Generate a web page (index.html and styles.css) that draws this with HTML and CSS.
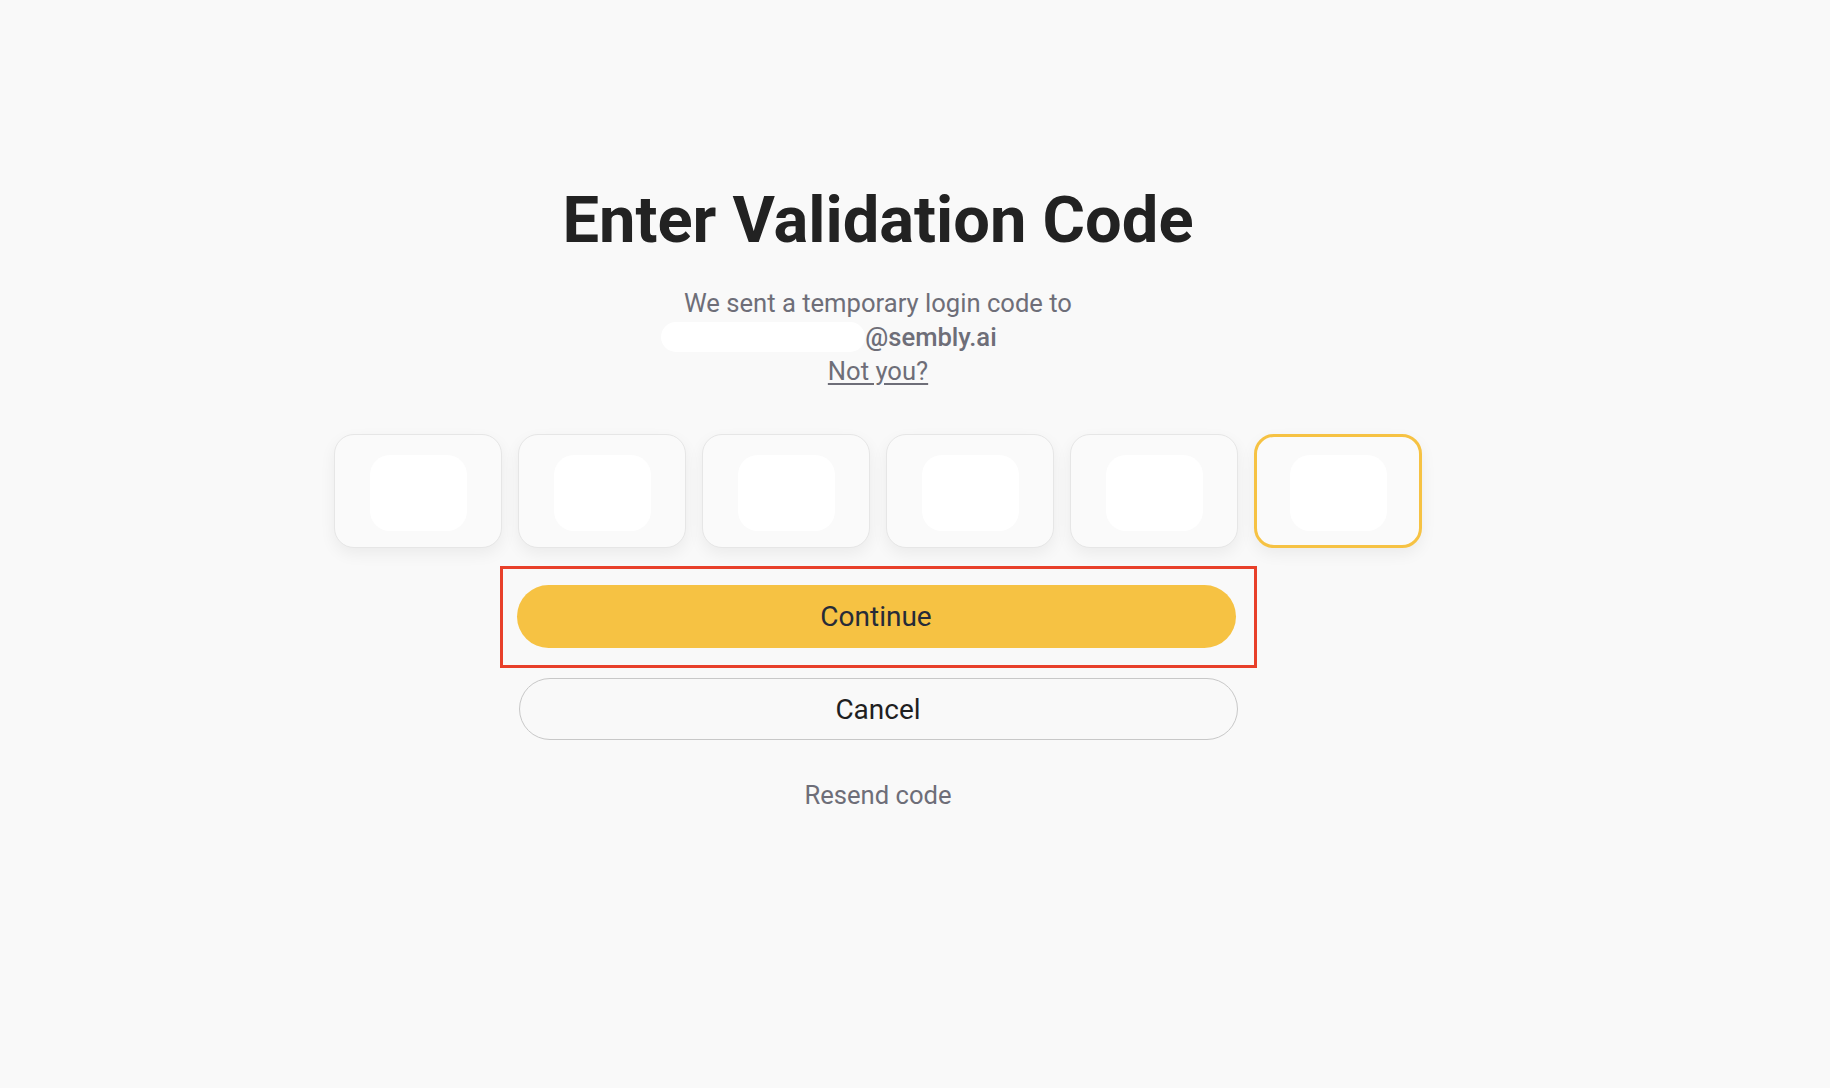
FILE: index.html
```html
<!DOCTYPE html>
<html lang="en">
<head>
    <meta charset="UTF-8">
    <meta name="viewport" content="width=device-width, initial-scale=1.0">
    <title>Enter Validation Code</title>
    <link rel="stylesheet" href="styles.css">
</head>
<body>
    <main class="validation">
        <h1 class="title">Enter Validation Code</h1>

        <p class="sent-to">
            We sent a temporary login code to<br>
            <span class="hidden-name"></span><strong class="domain">@sembly.ai</strong><br>
            <a href="#" class="not-you">Not you?</a>
        </p>

        <div class="code-row">
            <div class="code-box"><input class="code-input" type="text" maxlength="1"></div>
            <div class="code-box"><input class="code-input" type="text" maxlength="1"></div>
            <div class="code-box"><input class="code-input" type="text" maxlength="1"></div>
            <div class="code-box"><input class="code-input" type="text" maxlength="1"></div>
            <div class="code-box"><input class="code-input" type="text" maxlength="1"></div>
            <div class="code-box active"><input class="code-input" type="text" maxlength="1"></div>
        </div>

        <div class="continue-wrap">
            <button class="btn btn-primary">Continue</button>
        </div>
        <button class="btn btn-outline">Cancel</button>

        <a href="#" class="resend">Resend code</a>
    </main>
</body>
</html>
```

FILE: styles.css
```css
*{
    margin: 0;
    padding: 0;
    box-sizing: border-box;
}

body{
    background-color: #f9f9f9;
    font-family: Roboto, 'Liberation Sans', sans-serif;
    color: #222;
    height: 100vh;
}

.validation{
    display: flex;
    flex-direction: column;
    align-items: center;
    padding-top: 181px;
    padding-right: 74px;
}

.title{
    font-size: 65px;
    font-weight: 700;
    line-height: 78px;
    color: #222;
}

.sent-to{
    margin-top: 27px;
    font-size: 25.6px;
    line-height: 34px;
    color: #6e6e78;
    text-align: center;
}

.domain{
    font-weight: 500;
    padding-right: 98px;
}

.hidden-name{
    display: inline-block;
    width: 204px;
    height: 30px;
    border-radius: 15px;
    background-color: #fff;
    vertical-align: middle;
    margin-top: -4px;
}

.not-you{
    color: #6e6e78;
    text-decoration: underline;
    text-underline-offset: 3px;
}

.code-row{
    display: flex;
    gap: 16px;
    margin-top: 46px;
}

.code-box{
    width: 168px;
    height: 114px;
    display: flex;
    align-items: center;
    justify-content: center;
    background-color: #fafafa;
    border: 1px solid #e6e6e6;
    border-radius: 20px;
    box-shadow: 0 6px 16px rgba(0, 0, 0, 0.06);
}

.code-box.active{
    border: 3px solid #f6c243;
}

.code-input{
    width: 97px;
    height: 76px;
    margin-top: 4px;
    border: none;
    outline: none;
    border-radius: 20px;
    background-color: #fff;
    font-family: inherit;
    font-size: 36px;
    text-align: center;
}

.continue-wrap{
    margin-top: 18px;
    padding: 16px 18px 17px 14px;
    border: 3px solid #e8402a;
}

.btn{
    width: 719px;
    height: 63px;
    border-radius: 32px;
    font-family: inherit;
    font-size: 28px;
    cursor: pointer;
    display: block;
}

.btn-primary{
    background-color: #f6c243;
    border: none;
    color: #262b38;
}

.btn-outline{
    margin-top: 10px;
    height: 62px;
    background-color: transparent;
    border: 1px solid #c8c8c8;
    color: #1f1f1f;
}

.resend{
    margin-top: 40px;
    font-size: 25.6px;
    color: #6e6e78;
    text-decoration: none;
}
```
